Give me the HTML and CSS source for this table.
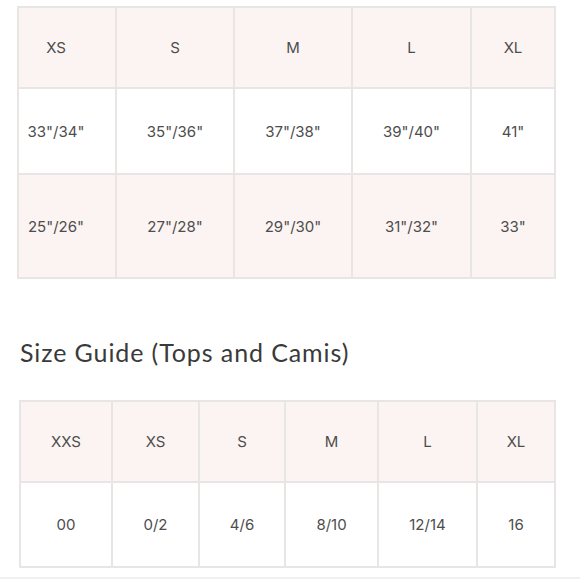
FILE: index.html
```html
<!DOCTYPE html>
<html>
<head>
<meta charset="utf-8">
<link rel="stylesheet" href="styles.css">
</head>
<body>
<div class="page">
  <table class="size-table t1">
    <colgroup>
      <col style="width:98px"><col style="width:118px"><col style="width:118px"><col style="width:119px"><col style="width:84px">
    </colgroup>
    <tr class="head r1">
      <td class="first">XS</td><td>S</td><td>M</td><td>L</td><td>XL</td>
    </tr>
    <tr class="r2">
      <td class="first">33"/34"</td><td>35"/36"</td><td>37"/38"</td><td>39"/40"</td><td>41"</td>
    </tr>
    <tr class="pink r3">
      <td class="first">25"/26"</td><td>27"/28"</td><td>29"/30"</td><td>31"/32"</td><td>33"</td>
    </tr>
  </table>

  <h2 class="title">Size Guide (Tops and Camis)</h2>

  <table class="size-table t2">
    <colgroup>
      <col style="width:92px"><col style="width:87px"><col style="width:86px"><col style="width:93px"><col style="width:99px"><col style="width:78px">
    </colgroup>
    <tr class="head s1">
      <td>XXS</td><td>XS</td><td>S</td><td>M</td><td>L</td><td>XL</td>
    </tr>
    <tr class="s2">
      <td>00</td><td>0/2</td><td>4/6</td><td>8/10</td><td>12/14</td><td>16</td>
    </tr>
  </table>
</div>
<div class="bottom-line"></div>
</body>
</html>
```

FILE: styles.css
```css
html, body {
  margin: 0;
  padding: 0;
  background: #ffffff;
}
.page {
  padding-top: 6px;
  height: 577px;
  box-sizing: border-box;
}
.size-table {
  border-collapse: collapse;
  table-layout: fixed;
  font-family: "Inter", "Noto Sans", sans-serif;
  font-size: 15px;
  color: #4d4d4d;
}
.size-table td {
  border: 2px solid #e8e6e5;
  text-align: center;
  vertical-align: middle;
  padding: 0;
}
.t1 {
  margin-left: 17px;
  width: 537px;
}
.t1 td.first {
  padding-right: 22px;
}
.head td, .pink td {
  background: #fcf4f2;
}
.r1 { height: 81px; }
.r2 { height: 86px; }
.r3 { height: 104px; }
.title {
  margin: 59px 0 0 20px;
  font-family: "Lato", "Open Sans", sans-serif;
  font-weight: 400;
  font-size: 25px;
  letter-spacing: 0.9px;
  line-height: 28px;
  color: #3a3a3a;
}
.t2 {
  margin-top: 34px;
  margin-left: 19px;
  width: 535px;
}
.s1 { height: 81px; }
.s2 { height: 85px; }
.bottom-line {
  height: 2px;
  background: #f0f0f0;
}
```
